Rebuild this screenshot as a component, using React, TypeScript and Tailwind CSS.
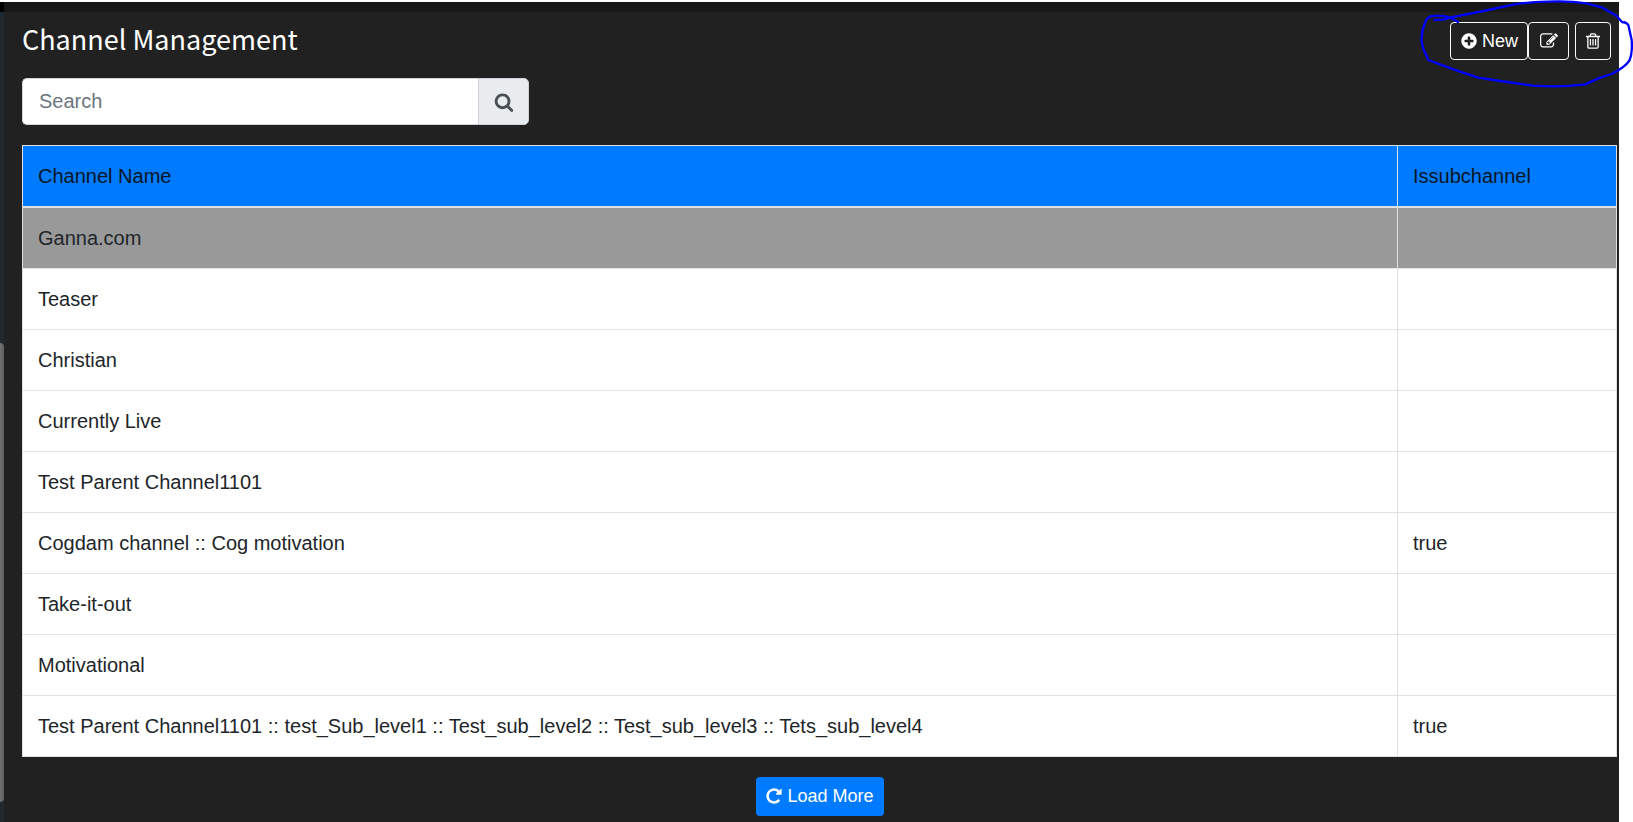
import { useState } from 'react';
import type { ReactNode } from 'react';

interface Channel {
  id: number;
  name: string;
  isSubchannel: boolean;
}

const channels: Channel[] = [
  { id: 1, name: 'Ganna.com', isSubchannel: false },
  { id: 2, name: 'Teaser', isSubchannel: false },
  { id: 3, name: 'Christian', isSubchannel: false },
  { id: 4, name: 'Currently Live', isSubchannel: false },
  { id: 5, name: 'Test Parent Channel1101', isSubchannel: false },
  { id: 6, name: 'Cogdam channel :: Cog motivation', isSubchannel: true },
  { id: 7, name: 'Take-it-out', isSubchannel: false },
  { id: 8, name: 'Motivational', isSubchannel: false },
  {
    id: 9,
    name: 'Test Parent Channel1101 :: test_Sub_level1 :: Test_sub_level2 :: Test_sub_level3 :: Tets_sub_level4',
    isSubchannel: true,
  },
];

const icons = {
  plus: 'M1344 960v-128q0-26-19-45t-45-19h-256v-256q0-26-19-45t-45-19h-128q-26 0-45 19t-19 45v256h-256q-26 0-45 19t-19 45v128q0 26 19 45t45 19h256v256q0 26 19 45t45 19h128q26 0 45-19t19-45v-256h256q26 0 45-19t19-45zm320-64q0 209-103 385.5t-279.5 279.5-385.5 103-385.5-103-279.5-279.5-103-385.5 103-385.5 279.5-279.5 385.5-103 385.5 103 279.5 279.5 103 385.5z',
  edit: 'M888 1184l116-116-152-152-116 116v56h96v96h56zm440-720q-16-16-33 1l-350 350q-17 17-1 33t33-1l350-350q17-17 1-33zm80 594v190q0 119-84.5 203.5t-203.5 84.5h-832q-119 0-203.5-84.5t-84.5-203.5v-832q0-119 84.5-203.5t203.5-84.5h832q63 0 117 25 15 7 18 23 3 17-9 29l-49 49q-14 14-32 8-23-6-45-6h-832q-66 0-113 47t-47 113v832q0 66 47 113t113 47h832q66 0 113-47t47-113v-126q0-13 9-22l64-64q15-15 35-7t20 29zm-96-738l288 288-672 672h-288v-288zm444 132l-92 92-288-288 92-92q28-28 68-28t68 28l152 152q28 28 28 68t-28 68z',
  trash: 'M704 736v576q0 14-9 23t-23 9h-64q-14 0-23-9t-9-23v-576q0-14 9-23t23-9h64q14 0 23 9t9 23zm256 0v576q0 14-9 23t-23 9h-64q-14 0-23-9t-9-23v-576q0-14 9-23t23-9h64q14 0 23 9t9 23zm256 0v576q0 14-9 23t-23 9h-64q-14 0-23-9t-9-23v-576q0-14 9-23t23-9h64q14 0 23 9t9 23zm128 724v-948h-896v948q0 22 7 40.5t14.5 27 10.5 8.5h832q3 0 10.5-8.5t14.5-27 7-40.5zm-672-1076h448l-48-117q-7-9-17-11h-317q-10 2-17 11zm928 32v64q0 14-9 23t-23 9h-96v948q0 83-47 143.5t-113 60.5h-832q-66 0-113-58.5t-47-141.5v-952h-96q-14 0-23-9t-9-23v-64q0-14 9-23t23-9h309l70-167q15-37 54-63t79-26h320q40 0 79 26t54 63l70 167h309q14 0 23 9t9 23z',
  search: 'M1216 832q0-185-131.5-316.5t-316.5-131.5-316.5 131.5-131.5 316.5 131.5 316.5 316.5 131.5 316.5-131.5 131.5-316.5zm512 832q0 52-38 90t-90 38q-54 0-90-38l-343-342q-179 124-399 124-143 0-273.5-55.5t-225-150-150-225-55.5-273.5 55.5-273.5 150-225 225-150 273.5-55.5 273.5 55.5 225 150 150 225 55.5 273.5q0 220-124 399l343 343q37 37 37 90z',
  repeat: 'M1664 256v448q0 26-19 45t-45 19h-448q-42 0-59-40-17-39 14-69l138-138q-148-137-349-137-104 0-198.5 40.5t-163.5 109.5-109.5 163.5-40.5 198.5 40.5 198.5 109.5 163.5 163.5 109.5 198.5 40.5q119 0 225-52t179-147q7-10 23-12 15 0 25 9l137 138q9 8 9.5 20.5t-7.5 22.5q-109 132-264 204.5t-322 72.5q-156 0-298-61t-245-164-164-245-61-298 61-298 164-245 245-164 298-61q147 0 284.5 55.5t244.5 156.5l130-129q29-31 70-14 39 17 39 59z',
};

function Icon({ name, className }: { name: keyof typeof icons; className: string }) {
  return (
    <svg viewBox="0 0 1792 1792" fill="currentColor" aria-hidden="true" className={`shrink-0 ${className}`}>
      <path d={icons[name]} />
    </svg>
  );
}

function ToolbarButton({ label, className, children }: { label: string; className: string; children: ReactNode }) {
  return (
    <button
      type="button"
      aria-label={label}
      className={`flex h-[38px] items-center justify-center rounded border border-[#f8f9fa] text-lg text-white ${className}`}
    >
      {children}
    </button>
  );
}

// Pen stroke drawn around the toolbar
function PenMark() {
  return (
    <svg
      viewBox="0 0 699 330"
      fill="none"
      stroke="#0000ff"
      strokeWidth="7"
      strokeLinecap="round"
      strokeLinejoin="round"
      aria-hidden="true"
      className="pointer-events-none absolute top-0 right-0 h-[110px] w-[233px]"
    >
      <path d="M174 66L152 53Q120 43 92 49Q80 53 75 68Q63 95 65 125Q69 150 79 166L85 180L128 196L180 215L235 233L300 243L400 257Q480 263 556 253L595 235L635 222Q675 202 688 182Q698 160 695 120L685 75Q680 67 666 66L650 48L605 22L560 10Q520 4 480 4Q400 3 340 14L250 33L200 43L152 52L134 58L103 60" />
    </svg>
  );
}

function App() {
  const [query, setQuery] = useState('');
  const [selectedId, setSelectedId] = useState(1);

  return (
    <div className="relative flex min-h-screen bg-white pt-0.5 font-['Liberation_Sans',Arial,sans-serif] text-[#212529]">
      <div className="flex w-1 shrink-0 flex-col bg-[#1f292f]">
        <div className="h-2.5 bg-black" />
        <div className="mt-[331px] mb-5 flex-1 rounded-r bg-linear-to-r from-[#707070] to-[#606060]" />
      </div>

      <main className="mr-3.5 min-w-0 flex-1 bg-[#212121]">
        <div className="h-2.5 bg-[#181818]" />
        <div className="pr-0.5 pl-[18px]">
          <header className="flex items-start justify-between pt-2.5 pr-1.5">
            <h1 className="text-[27px] leading-[34px] font-normal text-white font-['Noto_Sans_CJK_SC',sans-serif]">
              Channel Management
            </h1>
            <div className="flex">
              <ToolbarButton label="New" className="w-[78px] gap-1">
                <Icon name="plus" className="size-[18px]" />
                New
              </ToolbarButton>
              <ToolbarButton label="Edit" className="w-[41px]">
                <Icon name="edit" className="size-[18px]" />
              </ToolbarButton>
              <ToolbarButton label="Delete" className="ml-1.5 w-9">
                <Icon name="trash" className="size-[18px]" />
              </ToolbarButton>
            </div>
          </header>

          <form className="mt-[18px] flex h-[47px] w-[507px]" onSubmit={(e) => e.preventDefault()}>
            <input
              type="text"
              aria-label="Search"
              placeholder="Search"
              value={query}
              onChange={(e) => setQuery(e.target.value)}
              className="min-w-0 flex-1 rounded-l-[5px] border border-r-0 border-[#ced4da] bg-white px-4 pb-0.5 text-xl text-[#495057] outline-none placeholder:text-[#6c757d]"
            />
            <button
              type="submit"
              aria-label="Submit search"
              className="flex w-[51px] items-center justify-center rounded-r-[5px] border border-[#ced4da] bg-[#e9ecef] text-[#495057]"
            >
              <Icon name="search" className="size-5" />
            </button>
          </form>

          <table className="mt-5 w-full table-fixed border-collapse border border-[#dee2e6] bg-white text-xl leading-[30px]">
            <thead>
              <tr className="bg-[#007bff] text-left text-[#0b1524]">
                <th scope="col" className="border border-b-2 border-[#dee2e6] px-[15px] py-[15px] font-normal">
                  Channel Name
                </th>
                <th scope="col" className="w-[219px] border border-b-2 border-[#dee2e6] px-[15px] py-[15px] font-normal">
                  Issubchannel
                </th>
              </tr>
            </thead>
            <tbody>
              {channels.map((channel) => (
                <tr
                  key={channel.id}
                  onClick={() => setSelectedId(channel.id)}
                  className={channel.id === selectedId ? 'bg-[#999999]' : 'bg-white'}
                >
                  <td className="border border-[#dee2e6] px-[15px] py-[15px]">{channel.name}</td>
                  <td className="border border-[#dee2e6] px-[15px] py-[15px]">{channel.isSubchannel ? 'true' : ''}</td>
                </tr>
              ))}
            </tbody>
          </table>

          <div className="flex justify-center pt-5 pb-1">
            <button
              type="button"
              className="flex h-[39px] w-32 items-center justify-center gap-1 rounded bg-[#007bff] pb-0.5 text-lg text-white"
            >
              <Icon name="repeat" className="size-[18px]" />
              Load More
            </button>
          </div>
        </div>
      </main>

      <PenMark />
    </div>
  );
}

export default App;
